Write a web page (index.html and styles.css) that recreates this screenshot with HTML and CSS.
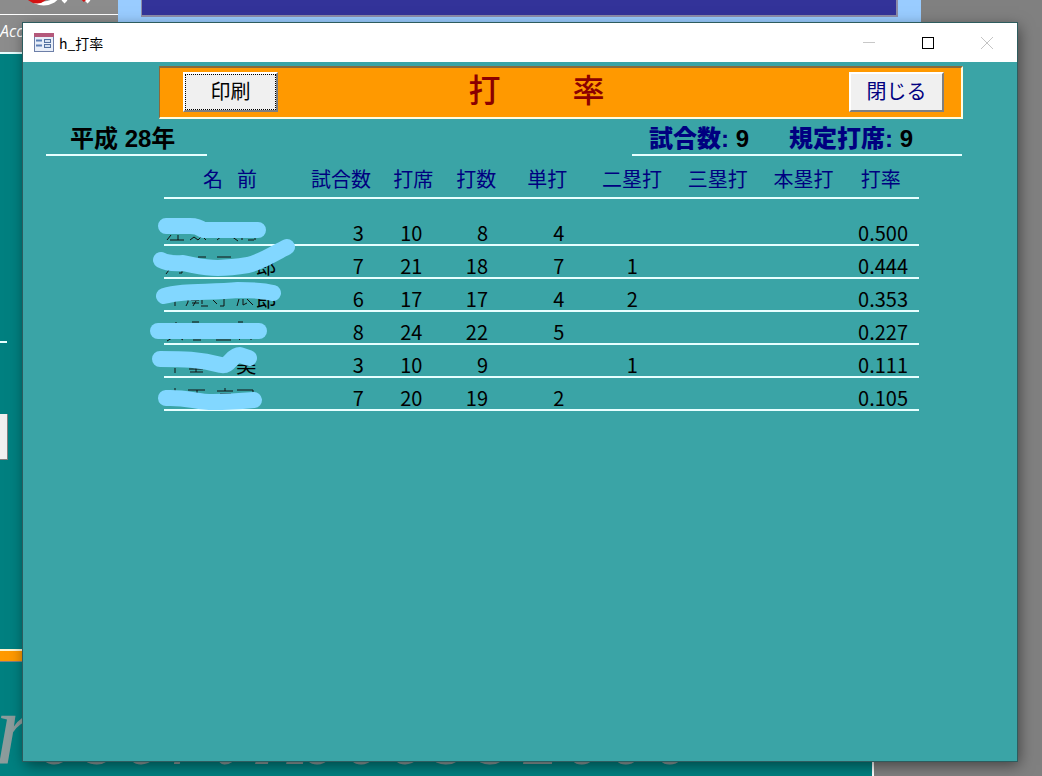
FILE: index.html
```html
<!DOCTYPE html>
<html lang="ja">
<head>
<meta charset="UTF-8">
<meta name="viewport" content="width=device-width, initial-scale=1.0">
<title>h_打率</title>
<link rel="stylesheet" href="styles.css">
</head>
<body>

<!-- Ventanas de fondo -->
<div class="desktop" aria-hidden="true">
    <div class="menu-form">
        <div class="menu-head">
            <svg class="menu-logo" width="118" height="14" viewBox="0 0 118 14">
                <path d="M34 1Q44 6 53 1L58 -3M63 -1l3 3M86 -1l3 3" fill="none" stroke="#fff" stroke-width="4"/>
                <path d="M29 -3Q37 4 45 -3M83 -3l3 3" fill="none" stroke="#d31212" stroke-width="6"/>
            </svg>
            <p class="menu-sub">Acc</p>
        </div>
        <div class="menu-line"></div>
        <div class="menu-box"></div>
        <div class="menu-strip"></div>
        <div class="menu-mark">
            <span class="big">r</span><span>o</span><span>b</span><span>e</span><span>r</span><span>t</span><span>A</span><span>c</span><span>c</span><span>e</span><span>s</span><span>s</span><span>2</span><span>0</span><span>0</span><span>0</span>
        </div>
    </div>
    <div class="blue-form"><div class="blue-inner"></div></div>
</div>

<main class="window">
    <header class="titlebar">
        <svg class="form-icon" width="20" height="19" viewBox="0 0 20 19">
            <rect x="0.5" y="0.5" width="19" height="18" fill="#e8eef8" stroke="#6d7fa8"/>
            <rect width="20" height="4" fill="#b4587a"/>
            <path d="M2 7.5h6M2 12.5h6" stroke="#5d7fb5" stroke-width="2"/>
            <rect x="10.5" y="6.5" width="6" height="3" fill="#d3dff0" stroke="#53719f"/>
            <rect x="10.5" y="11.5" width="6" height="3" fill="#d3dff0" stroke="#53719f"/>
        </svg>
        <h1 class="window-title">h_打率</h1>
        <div class="window-buttons">
            <button type="button" aria-label="最小化" disabled>
                <svg width="14" height="14" viewBox="0 0 14 14"><path d="M1 6.5h12" stroke="#c8c8c8"/></svg>
            </button>
            <button type="button" aria-label="最大化">
                <svg width="14" height="14" viewBox="0 0 14 14"><rect x="1.5" y="1.5" width="11" height="11" fill="none" stroke="#000"/></svg>
            </button>
            <button type="button" aria-label="ウィンドウを閉じる" disabled>
                <svg width="14" height="14" viewBox="0 0 14 14"><path d="M1 1l12 12M13 1L1 13" stroke="#c4c4c4"/></svg>
            </button>
        </div>
    </header>

    <section class="banner">
        <button type="button" class="btn btn-print">印刷</button>
        <h2 class="banner-title"><span>打</span><span>率</span></h2>
        <button type="button" class="btn btn-close">閉じる</button>
    </section>

    <section class="info">
        <p class="info-year">平成 28年</p>
        <p class="info-totals">
            <span><b>試合数:</b> 9</span>
            <span><b>規定打席:</b> 9</span>
        </p>
    </section>

    <section class="results">
        <table class="stats">
            <colgroup>
                <col class="col-name"><col class="col-games"><col class="col-pa"><col class="col-ab"><col class="col-single"><col class="col-double"><col class="col-triple"><col class="col-homer"><col class="col-avg">
            </colgroup>
            <thead>
                <tr>
                    <th>名&ensp;&thinsp;前</th><th>試合数</th><th>打席</th><th>打数</th><th>単打</th><th>二塁打</th><th>三塁打</th><th>本塁打</th><th>打率</th>
                </tr>
            </thead>
            <tbody>
                <tr><td></td><td>3</td><td>10</td><td>8</td><td>4</td><td></td><td></td><td></td><td>0.500</td></tr>
                <tr><td>郎</td><td>7</td><td>21</td><td>18</td><td>7</td><td>1</td><td></td><td></td><td>0.444</td></tr>
                <tr><td>郎</td><td>6</td><td>17</td><td>17</td><td>4</td><td>2</td><td></td><td></td><td>0.353</td></tr>
                <tr><td></td><td>8</td><td>24</td><td>22</td><td>5</td><td></td><td></td><td></td><td>0.227</td></tr>
                <tr><td class="short">美</td><td>3</td><td>10</td><td>9</td><td></td><td>1</td><td></td><td></td><td>0.111</td></tr>
                <tr><td></td><td>7</td><td>20</td><td>19</td><td>2</td><td></td><td></td><td></td><td>0.105</td></tr>
            </tbody>
        </table>
        <!-- Nombres tachados -->
        <svg class="marker" width="160" height="250" viewBox="148 162 160 250" aria-hidden="true">
            <g class="ink">
                <path d="M167 240l4-5M170 240h14M178 235v5M190 240l4-3 4 3 4-4 4 4M217 240l6-5M231 236l7 5M242 240v-4M248 240h6M255 235v5"/>
                <path d="M169 270l-3 4M179 273h3M182 268v5M198 257h8M217 257h14M241 272l4-3"/>
                <path d="M175 300v6M188 299v3l-2 4M191 300h8M192 303h7M193 306l3-5M202 300v4M201 306h7M213 300l4 4M224 299v7h-4M239 299l-2 7M243 299v6l4-2M247 299l6 6"/>
                <path d="M176 322v3M192 322h7M238 322h5M167 341l5-3M180 338l3 2M193 340h8M216 340h15M239 340l2-2M251 338v2"/>
                <path d="M175 368v5M189 369h14M196 367v5M190 372h13M221 371l5 1"/>
                <path d="M175 388v4M188 390h17M197 390v4M217 391h16M225 388v3M220 394h11M237 390h16v4"/>
            </g>
            <g class="strokes">
                <path d="M166 226H190Q198 226 203 230H258"/>
                <path d="M161 260Q168 264 183 263C205 268 218 270 248 265C264 261 276 252 287 247"/>
                <path d="M164 296C182 290 210 293 238 290Q262 290 273 293"/>
                <path d="M158 331H259"/>
                <path d="M160 359C183 359 199 359 221 365C230 367 231 355 240 355L249 358"/>
                <path d="M166 398C187 397 196 402 213 402Q230 402 254 400"/>
            </g>
        </svg>
    </section>
</main>

</body>
</html>
```
FILE: styles.css
```css
:root {
    --teal: #3aa4a6;
    --dark-teal: #008080;
    --orange: #ff9900;
    --navy: #000080;
    --line: #e6ffff;
    --gray: #808080;
}

* {
    box-sizing: border-box;
}

body {
    display: flex;
    min-height: 100vh;
    margin: 0;
    padding: 23px 25px 15px 23px;
    background-color: var(--gray);
    color: #000;
    font-family: "Noto Sans CJK JP", sans-serif;
}

h1, h2, p {
    margin: 0;
}

button {
    font-family: inherit;
}

/* Fondo */
.desktop {
    position: absolute;
    inset: 0;
    overflow: hidden;
}

.menu-form {
    position: absolute;
    inset: 0 168px 0 0;
    background-color: var(--dark-teal);
    border-right: 2px solid #fff;
}

.menu-head {
    height: 54px;
    background-color: #8c8c8c;
    border-bottom: 2px solid #e6ffff;
}

.menu-logo {
    display: block;
}

.menu-sub {
    border-top: 1px solid #fff;
    color: #fff;
    font: italic 16px/32px "Open Sans", sans-serif;
}

.menu-line,
.menu-box,
.menu-strip,
.menu-mark,
.blue-form {
    position: absolute;
    left: 0;
}

.menu-line {
    top: 341px;
    width: 7px;
    height: 2px;
    background-color: #e6ffff;
}

.menu-box {
    top: 414px;
    width: 8px;
    height: 46px;
    background-color: #f0f0f0;
    border-right: 1px solid var(--gray);
    border-bottom: 1px solid var(--gray);
}

.menu-strip {
    top: 649px;
    width: 100%;
    height: 13px;
    background-color: var(--orange);
    border-top: 2px solid #fff4d0;
    border-bottom: 1px solid var(--gray);
}

.menu-mark {
    bottom: -14px;
    left: -5px;
    display: flex;
    align-items: baseline;
    color: #8c9c9c;
    font: italic 72px/100px "Liberation Serif", serif;
}

.menu-mark span {
    width: 44px;
}

.menu-mark .big {
    font-size: 104px;
}

.blue-form {
    left: 118px;
    right: 121px;
    top: 0;
    height: 50px;
    padding: 0 23px;
    background-color: #99ccff;
}

.blue-inner {
    height: 17px;
    background-color: #333399;
    border: 1px solid #8c8ca8;
    border-width: 0 2px 2px 1px;
}

/* Ventana principal */
.window {
    position: relative;
    flex: 1;
    min-width: 0;
    background-color: var(--teal);
    box-shadow: 0 0 0 1px #2d5c5e, 2px 4px 14px rgba(0, 0, 0, 0.5);
}

.titlebar {
    display: flex;
    align-items: center;
    height: 39px;
    padding-left: 11px;
    background-color: #fff;
}

.window-title {
    flex: 1;
    margin-left: 5px;
    font-size: 14px;
    font-weight: 400;
    line-height: 18px;
}

.window-buttons {
    display: flex;
    padding-right: 1px;
}

.window-buttons button {
    display: flex;
    align-items: center;
    justify-content: center;
    width: 59px;
    height: 37px;
    padding: 0;
    background: none;
    border: 0;
}

.banner {
    display: flex;
    align-items: flex-start;
    height: 53px;
    margin: 4px 54px 0 136px;
    padding: 4px 17px 0 23px;
    background-color: var(--orange);
    border: 2px solid;
    border-color: #8a6a3a #fffbe0 #fffbe0 #8a6a3a;
    border-width: 2px 2px 2px 1px;
}

.banner-title {
    display: flex;
    flex: 1;
    justify-content: center;
    gap: 72px;
    padding-right: 54px;
    color: #8b0000;
    font-family: "Liberation Serif", "Noto Sans CJK JP", serif;
    font-size: 32px;
    font-weight: 500;
    line-height: 38px;
}

.btn {
    width: 95px;
    height: 40px;
    padding: 0 0 3px;
    background-color: #f0f0f0;
    border: 2px solid;
    border-color: #fff #808080 #808080 #fff;
    color: #000;
    font-size: 20px;
    line-height: 30px;
}

.btn-print {
    outline: 1px dotted #000;
    outline-offset: -3px;
}

.btn-close {
    color: var(--navy);
}

.info {
    display: flex;
    justify-content: space-between;
    margin: 4px 55px 0 23px;
    font-family: "Liberation Sans", "Noto Sans CJK JP", sans-serif;
    font-size: 24px;
    font-weight: 700;
    line-height: 32px;
}

.info-year,
.info-totals {
    height: 33px;
    border-bottom: 2px solid var(--line);
}

.info-year {
    width: 161px;
    padding-left: 24px;
}

.info-totals {
    display: flex;
    gap: 40px;
    width: 330px;
    padding-left: 17px;
}

.info-totals b {
    color: var(--navy);
}

.results {
    position: relative;
    margin: 6px 98px 0 141px;
}

.stats {
    width: 100%;
    table-layout: fixed;
    border-collapse: collapse;
    font-size: 20px;
    line-height: 20px;
}

.stats th,
.stats td {
    height: 33px;
    padding: 0;
    border-bottom: 2px solid var(--line);
    font-weight: 400;
    white-space: nowrap;
}

.stats th {
    height: 36px;
    padding-bottom: 2px;
    color: var(--navy);
}

.stats td {
    padding: 0 18px 1px 0;
    text-align: right;
    vertical-align: bottom;
}

.stats tbody tr:first-child td {
    height: 47px;
}

.stats td:nth-child(1) {
    padding-right: 20px;
}

.stats td.short {
    padding-right: 40px;
}

.stats td:nth-child(2) {
    padding-right: 22px;
}

.stats td:nth-child(4) {
    padding-right: 24px;
}

.stats td:nth-child(6) {
    padding-right: 44px;
}

.stats th:last-child,
.stats td:last-child {
    padding-right: 11px;
}

.col-name { width: 17.5%; }
.col-games { width: 11.9%; }
.col-pa { width: 7.2%; }
.col-ab { width: 9.5%; }
.col-single { width: 9.3%; }
.col-double { width: 13.2%; }
.col-triple { width: 9.5%; }
.col-homer { width: 13.2%; }
.col-avg { width: 8.7%; }

.marker {
    position: absolute;
    top: 0;
    left: -16px;
}

.ink {
    fill: none;
    stroke: #111;
    stroke-width: 1;
}

.strokes {
    fill: none;
    stroke: #82d7ff;
    stroke-width: 16;
    stroke-linecap: round;
    stroke-linejoin: round;
}
```
